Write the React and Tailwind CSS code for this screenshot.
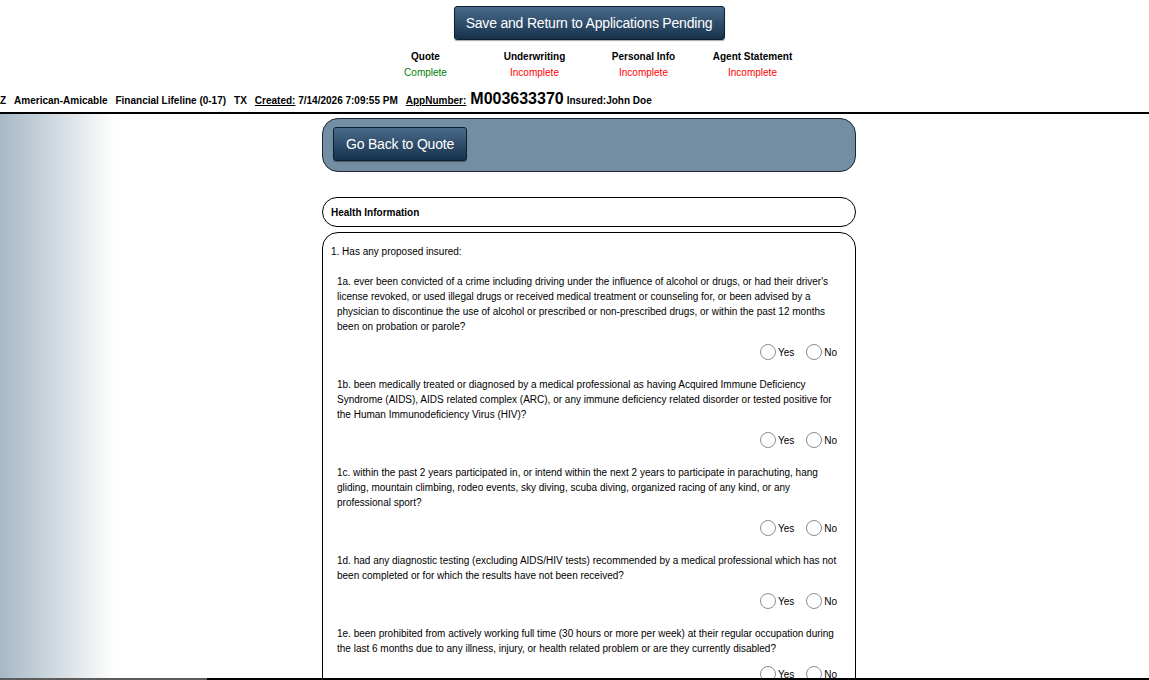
import React from 'react';

const font = "font-['Liberation_Sans',Arial,sans-serif]";

const statuses = [
    { title: 'Quote', state: 'Complete', done: true },
    { title: 'Underwriting', state: 'Incomplete', done: false },
    { title: 'Personal Info', state: 'Incomplete', done: false },
    { title: 'Agent Statement', state: 'Incomplete', done: false },
];

const questions = [
    "1a. ever been convicted of a crime including driving under the influence of alcohol or drugs, or had their driver's license revoked, or used illegal drugs or received medical treatment or counseling for, or been advised by a physician to discontinue the use of alcohol or prescribed or non-prescribed drugs, or within the past 12 months been on probation or parole?",
    "1b. been medically treated or diagnosed by a medical professional as having Acquired Immune Deficiency Syndrome (AIDS), AIDS related complex (ARC), or any immune deficiency related disorder or tested positive for the Human Immunodeficiency Virus (HIV)?",
    "1c. within the past 2 years participated in, or intend within the next 2 years to participate in parachuting, hang gliding, mountain climbing, rodeo events, sky diving, scuba diving, organized racing of any kind, or any professional sport?",
    "1d. had any diagnostic testing (excluding AIDS/HIV tests) recommended by a medical professional which has not been completed or for which the results have not been received?",
    "1e. been prohibited from actively working full time (30 hours or more per week) at their regular occupation during the last 6 months due to any illness, injury, or health related problem or are they currently disabled?",
];

const Radio = ({ label }) => (
    <label className="flex items-center cursor-pointer">
        <span className="w-4 h-4 rounded-full border border-[#8e8e8e] bg-white"></span>
        <span className="ml-[2px] text-[10px] text-black">{label}</span>
    </label>
);

const DarkButton = ({ children, width }) => (
    <button
        className={`${width} h-[34px] rounded-[3px] border border-[#0e1f30] bg-[linear-gradient(to_bottom,#4a6b8b,#16314b)] text-white text-[14px] tracking-[-0.2px] shadow-[0_1px_1px_rgba(0,0,0,0.35)]`}
    >
        {children}
    </button>
);

const App = () => {
    return (
        <div className={`min-h-screen bg-white text-black ${font}`}>
            {/* Header */}
            <div className="w-[534px] ml-[322px] pt-[6px] flex flex-col items-center">
                <DarkButton width="w-[271px]">Save and Return to Applications Pending</DarkButton>
                <div className="mt-[9px] grid grid-cols-4 w-[436px] text-center text-[10px] leading-4">
                    {statuses.map((s) => (
                        <div key={s.title}>
                            <div className="font-bold">{s.title}</div>
                            <div className={s.done ? 'text-[#008000]' : 'text-[#ff0000]'}>{s.state}</div>
                        </div>
                    ))}
                </div>
            </div>

            <div className="mt-[8px] h-5 flex items-baseline whitespace-nowrap text-[10px] font-bold leading-5">
                <span>Z</span>
                <span className="ml-[8px]">American-Amicable</span>
                <span className="ml-[8px]">Financial Lifeline (0-17)</span>
                <span className="ml-[8px]">TX</span>
                <span className="ml-[8px]"><span className="underline">Created:</span> 7/14/2026 7:09:55 PM</span>
                <span className="ml-[8px] underline">AppNumber:</span>
                <span className="ml-[4px] text-[16px]">M003633370</span>
                <span className="ml-[3px]">Insured:John Doe</span>
            </div>

            <div className="mt-[3px] border-t-2 border-black"></div>

            {/* Body */}
            <div className="bg-[linear-gradient(to_right,#a7b8c5_0px,#ffffff_115px)] pt-1 pb-40">
                <div className="w-[534px] ml-[322px]">
                    <div className="h-[54px] rounded-2xl border border-[#1c2733] bg-[#738da3] pt-2 pl-[10px]">
                        <DarkButton width="w-[134px]">Go Back to Quote</DarkButton>
                    </div>

                    <div className="mt-[25px] h-[30px] rounded-[15px] border border-black bg-white flex items-center pl-2 text-[10px] font-bold">
                        Health Information
                    </div>

                    <div className="mt-[5px] rounded-2xl border border-black bg-white pt-[11px] pl-2 pr-[10px] pb-8 text-[10px] leading-[15px]">
                        <div>1. Has any proposed insured:</div>
                        <div className="mt-[15px] pl-[6px]">
                            {questions.map((q) => (
                                <div key={q} className="mb-[15px]">
                                    <p>{q}</p>
                                    <div className="mt-2 h-5 flex items-center justify-end gap-3 pr-2">
                                        <Radio label="Yes" />
                                        <Radio label="No" />
                                    </div>
                                </div>
                            ))}
                        </div>
                    </div>
                </div>
            </div>

            {/* Bottom scrollbar edge */}
            <div className="fixed bottom-0 left-0 right-0 h-[2px] flex">
                <div className="w-[207px] bg-[#5c5c5c]"></div>
                <div className="flex-1 bg-black"></div>
            </div>
        </div>
    );
};

export default App;
